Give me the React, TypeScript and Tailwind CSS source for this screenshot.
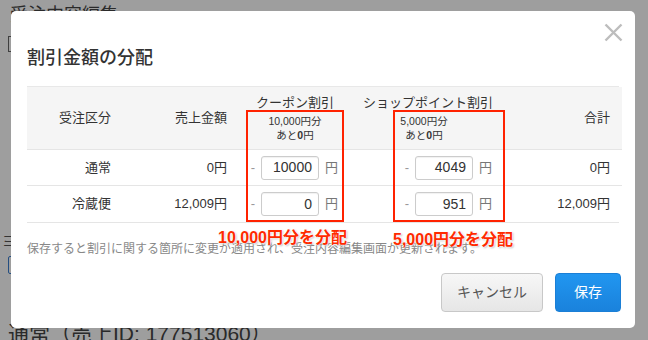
import React from "react";

const font = { fontFamily: '"Liberation Sans", "Noto Sans CJK JP", sans-serif' };

const rows = [
  { kind: "通常", sales: "0円", coupon: "10000", point: "4049", total: "0円" },
  { kind: "冷蔵便", sales: "12,009円", coupon: "0", point: "951", total: "12,009円" },
];

function AmountInput({ value }: { value: string }) {
  return (
    <div className="flex items-center justify-end pr-[13px]">
      <span className="text-[#999] mr-[6px]">-</span>
      <div className="w-[58px] h-[24px] border border-[#ccc] rounded-[3px] bg-white flex items-center justify-end pr-[6px] text-[14px] text-[#333] shadow-[inset_0_1px_1px_rgba(0,0,0,0.06)]">
        {value}
      </div>
      <span className="text-[#777] ml-[6px]">円</span>
    </div>
  );
}

export default function App() {
  return (
    <div className="relative w-[648px] h-[340px] overflow-hidden bg-white" style={font}>
      {/* page behind the dialog */}
      <div className="pl-[10px] pt-[4px] text-[18px] leading-[22px] text-[#444]">受注内容編集</div>
      <div className="ml-[8px] mt-[10px] w-[80px] h-[16px] border border-[#666]" />
      <div className="ml-[2px] mt-[179px] text-[14px] text-[#555]">ヨ</div>
      <div className="ml-[8px] mt-[4px] w-[80px] h-[18px] border border-[#3b7fd0] rounded-[2px]" />
      <div className="pl-[8px] mt-[46px] text-[21px] leading-[28px] text-[#444]">
        通常（売上ID: 177513060）
      </div>

      <div className="absolute inset-0 bg-black/[0.38]" />

      {/* dialog */}
      <div className="absolute left-[11px] top-[11px] w-[624px] h-[317px] bg-white rounded-[5px] px-[16px] pt-[35px] pb-[17px] text-[#333]">
        <svg
          className="absolute top-[12px] right-[12px]"
          width="19"
          height="19"
          viewBox="0 0 19 19"
        >
          <path d="M1.5 1.5 L17.5 17.5 M17.5 1.5 L1.5 17.5" stroke="#bdbdbd" strokeWidth="2.4" />
        </svg>

        <h2 className="text-[18px] leading-[24px] font-medium text-[#333]">割引金額の分配</h2>

        <div className="mt-[16px] grid grid-cols-[96px_116px_112px_154px_117px] text-[13px] border-t border-[#e8e8e8]">
          <div className="h-[62px] bg-[#f5f5f5] flex items-center justify-end pr-[12px]">受注区分</div>
          <div className="h-[62px] bg-[#f5f5f5] flex items-center justify-end pr-[12px]">売上金額</div>
          <div className="h-[62px] bg-[#f5f5f5] flex flex-col items-center justify-center">
            <div className="leading-[18px] mb-[2px]">クーポン割引</div>
            <div className="text-[10.5px] leading-[14px]">10,000円分</div>
            <div className="text-[10.5px] leading-[14px]">
              あと<span className="font-bold">0</span>円
            </div>
          </div>
          <div className="h-[62px] bg-[#f5f5f5] flex flex-col items-center justify-center">
            <div className="leading-[18px] mb-[2px]">ショップポイント割引</div>
            <div className="text-[10.5px] leading-[14px] pr-[8px]">5,000円分</div>
            <div className="text-[10.5px] leading-[14px] pr-[8px]">
              あと<span className="font-bold">0</span>円
            </div>
          </div>
          <div className="h-[62px] bg-[#f5f5f5] flex items-center justify-end pr-[12px]">合計</div>

          {rows.map((r, i) => (
            <React.Fragment key={i}>
              <div className={`${i === 0 ? "h-[36px]" : "h-[37px]"} border-t border-[#e5e5e5] flex items-center justify-end pr-[12px]`}>
                {r.kind}
              </div>
              <div className="border-t border-[#e5e5e5] flex items-center justify-end pr-[12px]">{r.sales}</div>
              <div className="border-t border-[#e5e5e5] flex items-center justify-end">
                <AmountInput value={r.coupon} />
              </div>
              <div className="border-t border-[#e5e5e5] flex items-center justify-end">
                <AmountInput value={r.point} />
              </div>
              <div className="border-t border-[#e5e5e5] flex items-center justify-end pr-[12px]">{r.total}</div>
            </React.Fragment>
          ))}
        </div>
        <div className="border-t border-[#e5e5e5]" />

        <p className="mt-[17px] text-[12px] leading-[18px] text-[#888]">
          保存すると割引に関する箇所に変更が適用され、受注内容編集画面が更新されます。
        </p>

        <div className="mt-[15px] -mr-[2px] flex justify-end gap-[12px]">
          <button className="w-[102px] h-[39px] rounded-[4px] border border-[#c8c8c8] bg-gradient-to-b from-[#f7f7f7] to-[#e6e6e6] text-[14px] text-[#555]">
            キャンセル
          </button>
          <button className="w-[66px] h-[39px] rounded-[4px] border border-[#1b7fd6] bg-gradient-to-b from-[#2196f0] to-[#1a82dc] text-[14px] text-white">
            保存
          </button>
        </div>

        {/* annotations */}
        <div className="absolute left-[235px] top-[99px] w-[98px] h-[112px] border-2 border-[#ff2200]" />
        <div className="absolute left-[382px] top-[99px] w-[112px] h-[112px] border-2 border-[#ff2200]" />
        <div className="absolute left-[207px] top-[216px] text-[16px] leading-[22px] font-bold text-[#ff2a00] [text-shadow:0_0_2px_#fff,0_0_2px_#fff,0_0_3px_#fff,1px_1px_2px_rgba(0,0,0,0.35)]">
          10,000円分を分配
        </div>
        <div className="absolute left-[382px] top-[218px] text-[16px] leading-[22px] font-bold text-[#ff2a00] [text-shadow:0_0_2px_#fff,0_0_2px_#fff,0_0_3px_#fff,1px_1px_2px_rgba(0,0,0,0.35)]">
          5,000円分を分配
        </div>
      </div>
    </div>
  );
}
